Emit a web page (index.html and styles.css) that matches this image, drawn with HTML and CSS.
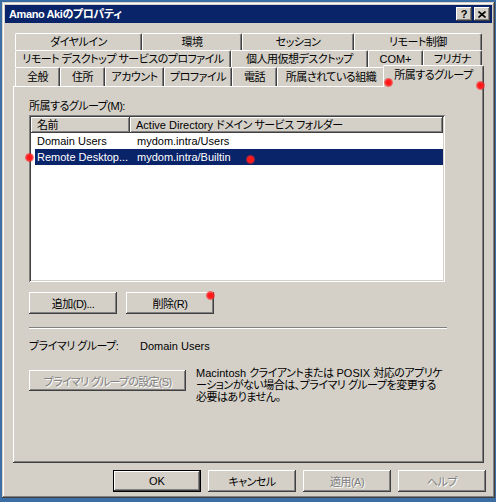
FILE: index.html
```html
<!DOCTYPE html>
<html lang="ja">
<head>
  <meta charset="UTF-8">
  <meta name="viewport" content="width=device-width, initial-scale=1.0">
  <title>Amano Akiのプロパティ</title>
  <link rel="stylesheet" href="styles.css">
</head>
<body>
  <div class="desktop">
    <div class="window">
      <!-- Title bar -->
      <div class="titlebar">
        <span class="title">Amano Akiのプロパティ</span>
        <div class="caption-buttons">
          <span class="caption-btn help">?</span>
          <span class="caption-btn close">
            <svg width="8" height="7" viewBox="0 0 8 7">
              <path d="M0.5 0.5 L7.5 6.5 M7.5 0.5 L0.5 6.5" stroke="#000" stroke-width="1.6" fill="none"/>
            </svg>
          </span>
        </div>
      </div>

      <!-- Tabs, three rows -->
      <div class="tabs">
        <div class="tab-row">
          <div class="tab tab-dialin">ダイヤルイン</div>
          <div class="tab tab-env">環境</div>
          <div class="tab tab-session">セッション</div>
          <div class="tab tab-remote">リモート制御</div>
        </div>
        <div class="tab-row">
          <div class="tab tab-rdprofile">リモート デスクトップ サービスのプロファイル</div>
          <div class="tab tab-vdesktop">個人用仮想デスクトップ</div>
          <div class="tab tab-com">COM+</div>
          <div class="tab tab-kana">フリガナ</div>
        </div>
        <div class="tab-row tab-row-front">
          <div class="tab tab-general">全般</div>
          <div class="tab tab-address">住所</div>
          <div class="tab tab-account">アカウント</div>
          <div class="tab tab-profile">プロファイル</div>
          <div class="tab tab-phone">電話</div>
          <div class="tab tab-org">所属されている組織</div>
          <div class="tab tab-member selected">所属するグループ</div>
        </div>
      </div>

      <!-- Tab page -->
      <div class="panel">
        <div class="label">所属するグループ(M):</div>
        <div class="listview">
          <div class="lv-header">
            <div class="lv-col col-name">名前</div>
            <div class="lv-col col-folder">Active Directory <span class="jp">ドメイン サービス フォルダー</span></div>
          </div>
          <div class="lv-row">
            <div class="cell cell-name">Domain Users</div>
            <div class="cell cell-folder">mydom.intra/Users</div>
          </div>
          <div class="lv-row selected-row">
            <div class="cell cell-name">Remote Desktop...</div>
            <div class="cell cell-folder">mydom.intra/Builtin</div>
          </div>
        </div>

        <div class="button-row">
          <div class="btn jp">追加(D)...</div>
          <div class="btn jp">削除(R)</div>
        </div>

        <div class="separator"></div>

        <div class="primary-row">
          <span class="primary-label jp">プライマリ グループ:</span>
          <span>Domain Users</span>
        </div>

        <div class="set-row">
          <div class="btn btn-wide disabled jp">プライマリ グループの設定(S)</div>
          <p class="note">Macintosh <span class="jp">クライアントまたは</span> POSIX <span class="jp">対応のアプリケ</span><br><span class="jp">ーションがない場合は、プライマリ グループを変更する</span><br><span class="jp">必要はありません。</span></p>
        </div>
      </div>

      <!-- Dialog buttons -->
      <div class="footer">
        <div class="btn default">OK</div>
        <div class="btn jp">キャンセル</div>
        <div class="btn disabled jp">適用(A)</div>
        <div class="btn disabled jp">ヘルプ</div>
      </div>
    </div>

    <!-- red marker dots from the screenshot -->
    <span class="dot dot-1"></span>
    <span class="dot dot-2"></span>
    <span class="dot dot-3"></span>
    <span class="dot dot-4"></span>
    <span class="dot dot-5"></span>
  </div>
</body>
</html>
```

FILE: styles.css
```css
/* Windows classic colours */
:root {
  --face: #d4d0c8;
  --light: #ffffff;
  --shadow: #808080;
  --dark: #404040;
  --title: #0a246a;
  --desktop: #3a6ea5;
}

* {
  margin: 0;
  padding: 0;
  box-sizing: border-box;
}

body {
  background: var(--desktop);
  font-family: "Liberation Sans", "Noto Sans CJK JP", sans-serif;
  font-size: 11px;
  font-feature-settings: "palt";
  color: #000;
}

/* japanese text runs a bit narrower, like MS UI Gothic */
.jp,
.tab,
.label {
  letter-spacing: -0.5px;
}

.desktop {
  position: relative;
  width: 496px;
  height: 502px;
  padding: 2px 1px 0 2px;
}

.window {
  width: 493px;
  height: 496px;
  padding: 3px;
  background: var(--face);
  display: flex;
  flex-direction: column;
  box-shadow: inset -1px -1px var(--dark), inset 1px 1px var(--face),
              inset -2px -2px var(--shadow), inset 2px 2px var(--light);
}

/* Title bar */
.titlebar {
  height: 18px;
  background: var(--title);
  display: flex;
  align-items: center;
  justify-content: space-between;
  padding: 0 2px 0 4px;
}

.title {
  color: #fff;
  font-weight: bold;
  font-size: 11px;
  line-height: 18px;
  letter-spacing: -0.4px;
}

.caption-buttons {
  display: flex;
  gap: 2px;
}

.caption-btn {
  width: 16px;
  height: 14px;
  background: var(--face);
  display: flex;
  align-items: center;
  justify-content: center;
  font-weight: bold;
  font-size: 11px;
  line-height: 1;
  box-shadow: inset -1px -1px var(--dark), inset 1px 1px var(--light),
              inset -2px -2px var(--shadow);
}

/* Tabs */
.tabs {
  margin: 10px 0 0 10px;
  width: 467px;
}

.tab-row {
  display: flex;
  height: 17px;
}

.tab-row-front {
  height: 19px;
}

.tab {
  height: 100%;
  display: flex;
  align-items: center;
  justify-content: center;
  white-space: nowrap;
  background: var(--face);
  border-top: 1px solid var(--light);
  border-left: 1px solid var(--light);
  border-right: 1px solid var(--dark);
  border-radius: 2px 2px 0 0;
  box-shadow: inset -1px 0 var(--shadow);
  line-height: 1;
  padding-top: 1px;
}

.tab-dialin { width: 127px; }
.tab-env { width: 100px; }
.tab-session { width: 112px; }
.tab-remote { width: 128px; }

.tab-rdprofile { width: 216px; }
.tab-vdesktop { width: 137px; }
.tab-com { width: 55px; letter-spacing: 0; }
.tab-kana { width: 59px; }

.tab-general { width: 45px; }
.tab-address { width: 45px; }
.tab-account { width: 59px; }
.tab-profile { width: 68px; }
.tab-phone { width: 45px; }
.tab-org { width: 108px; }
.tab-member { width: 97px; }

.tab.selected {
  position: relative;
  z-index: 1;
  height: 22px;
  margin: -2px -2px 0 -2px;
  width: 101px;
  padding: 0 0 3px;
}

/* Tab page */
.panel {
  margin-left: 8px;
  width: 471px;
  height: 377px;
  padding: 13px 0 0 16px;
  box-shadow: inset -1px -1px var(--dark), inset 1px 1px var(--light),
              inset -2px -2px var(--shadow);
}

.label {
  line-height: 14px;
  height: 16px;
}

.listview {
  width: 416px;
  height: 167px;
  background: #fff;
  padding: 2px;
  box-shadow: inset 1px 1px var(--shadow), inset -1px -1px var(--light),
              inset 2px 2px var(--dark), inset -2px -2px var(--face);
}

.lv-header {
  display: flex;
  height: 16px;
}

.lv-col {
  height: 16px;
  background: var(--face);
  padding-left: 6px;
  line-height: 16px;
  white-space: nowrap;
  box-shadow: inset -1px -1px var(--dark), inset 1px 1px var(--light),
              inset -2px -2px var(--shadow);
}

.col-name { width: 99px; letter-spacing: -0.5px; }
.col-folder { flex: 1; }

.lv-row {
  display: flex;
  height: 16px;
  margin-left: 4px;
  line-height: 16px;
  white-space: nowrap;
}

.cell-name {
  width: 95px;
  padding-left: 2px;
}

.cell-folder {
  padding-left: 7px;
}

.selected-row {
  background: var(--title);
  color: #fff;
}

/* Buttons */
.btn {
  flex: none;
  width: 88px;
  height: 22px;
  background: var(--face);
  display: flex;
  align-items: center;
  justify-content: center;
  white-space: nowrap;
  overflow: hidden;
  box-shadow: inset -1px -1px var(--dark), inset 1px 1px var(--light),
              inset -2px -2px var(--shadow);
}

.btn.default {
  border: 1px solid #000;
}

.btn.disabled {
  color: var(--shadow);
  text-shadow: 1px 1px var(--light);
}

.button-row {
  display: flex;
  gap: 9px;
  margin-top: 10px;
}

.separator {
  width: 418px;
  height: 2px;
  margin-top: 13px;
  border-top: 1px solid var(--shadow);
  border-bottom: 1px solid var(--light);
}

.primary-row {
  display: flex;
  margin-top: 10px;
  line-height: 14px;
}

.primary-label {
  width: 111px;
}

.set-row {
  display: flex;
  align-items: flex-start;
  gap: 10px;
  margin-top: 14px;
}

.btn-wide {
  width: 157px;
  height: 21px;
  margin-top: 3px;
  letter-spacing: -0.7px;
}

.note {
  line-height: 12px;
  white-space: nowrap;
}

/* Dialog buttons */
.footer {
  display: flex;
  justify-content: flex-end;
  gap: 7px;
  margin-top: 7px;
  padding-right: 6px;
}

/* Red markers */
.dot {
  position: absolute;
  z-index: 2;
  width: 9px;
  height: 9px;
  border-radius: 50%;
  background: radial-gradient(circle, #ff1010 0, #ff2020 40%, rgba(255, 60, 60, 0) 100%);
}

.dot-1 { left: 384px; top: 78px; }
.dot-2 { left: 476px; top: 81px; }
.dot-3 { left: 25px; top: 153px; }
.dot-4 { left: 246px; top: 155px; }
.dot-5 { left: 206px; top: 291px; }
```
